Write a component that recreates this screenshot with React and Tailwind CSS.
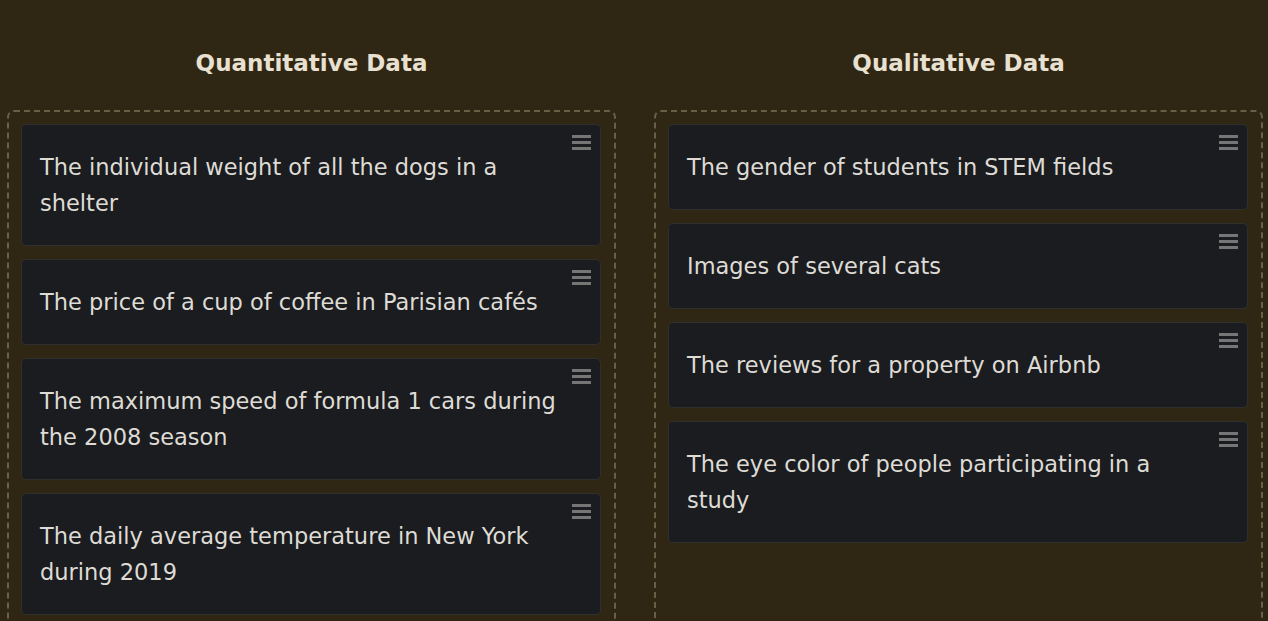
const quantitative = [
  "The individual weight of all the dogs in a shelter",
  "The price of a cup of coffee in Parisian cafés",
  "The maximum speed of formula 1 cars during the 2008 season",
  "The daily average temperature in New York during 2019",
];

const qualitative = [
  "The gender of students in STEM fields",
  "Images of several cats",
  "The reviews for a property on Airbnb",
  "The eye color of people participating in a study",
];

function Handle() {
  return (
    <span className="absolute right-[9px] top-[10px] flex w-[19px] flex-col gap-[3px]">
      <span className="h-[3px] bg-[#767676]" />
      <span className="h-[3px] bg-[#767676]" />
      <span className="h-[3px] bg-[#767676]" />
    </span>
  );
}

function Card({ text }) {
  return (
    <div className="relative rounded-[5px] border border-[#2f302d] bg-[#1b1c1f] py-[24px] pl-[18px] pr-[40px] text-[22.5px] leading-[36px] text-[#dedbd5]">
      {text}
      <Handle />
    </div>
  );
}

function Column({ title, items }) {
  return (
    <div className="flex flex-col">
      <h2 className="pb-[30px] pt-[46px] text-center text-[23px] font-bold leading-[34px] text-[#e8e0d0]">{title}</h2>
      <div className="flex min-h-[520px] flex-col gap-[13px] rounded-[7px] border-2 border-dashed border-[#6a5e44] pb-[14px] pl-[12px] pr-[13px] pt-[12px]">
        {items.map((item) => (
          <Card key={item} text={item} />
        ))}
      </div>
    </div>
  );
}

export default function App() {
  return (
    <div className="h-[621px] overflow-hidden bg-[#302614] pl-[7px] pr-[5px] font-['DejaVu_Sans',sans-serif]">
      <div className="grid grid-cols-2 gap-[38px]">
        <Column title="Quantitative Data" items={quantitative} />
        <Column title="Qualitative Data" items={qualitative} />
      </div>
    </div>
  );
}
